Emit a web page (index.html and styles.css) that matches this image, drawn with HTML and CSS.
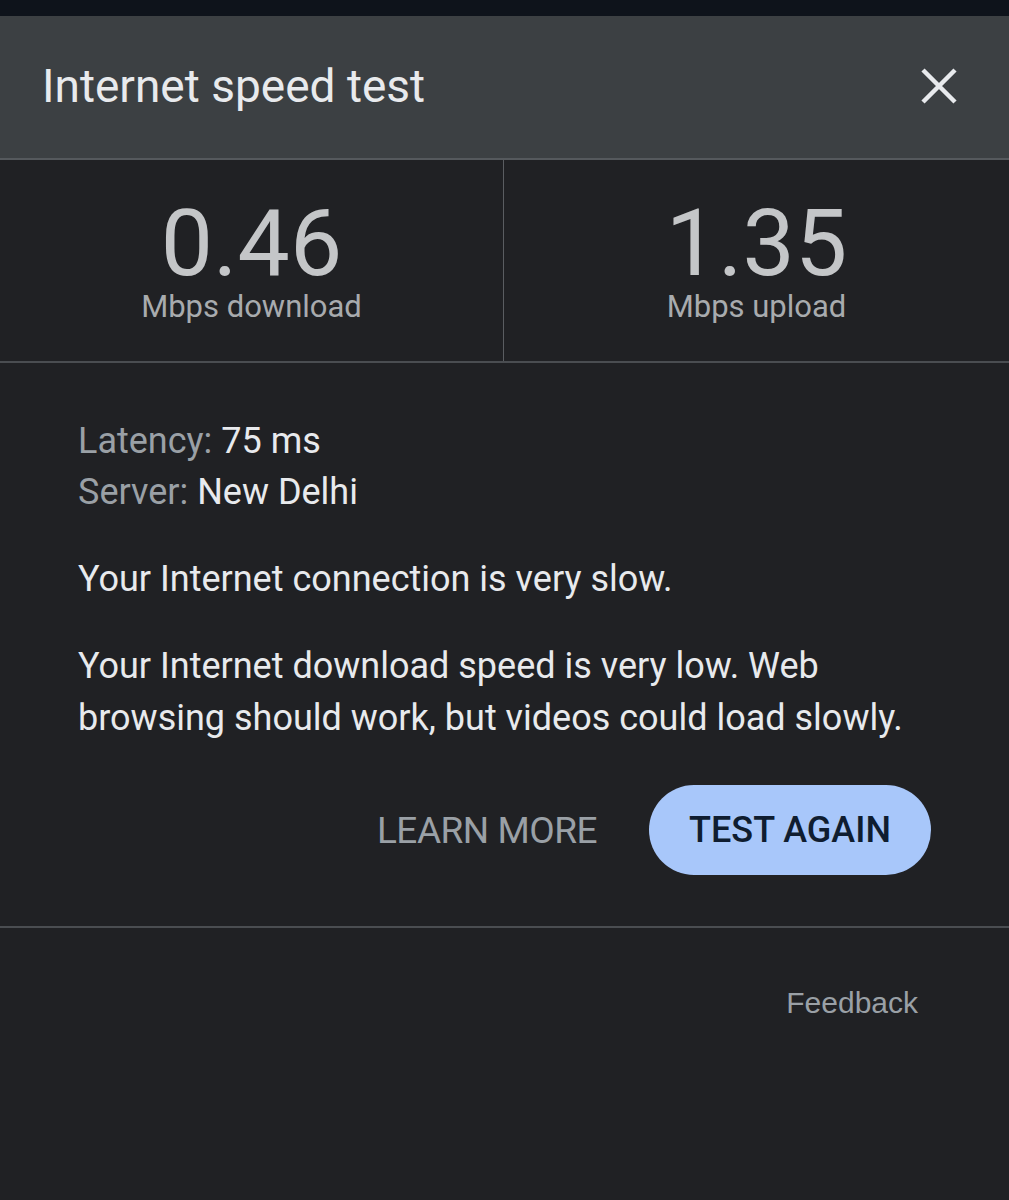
FILE: index.html
```html
<!DOCTYPE html>
<html>
<head>
<meta charset="utf-8">
<link rel="stylesheet" href="styles.css">
</head>
<body>
<div class="topstrip"></div>
<div class="dialog">
  <header class="head">
    <h1 class="title">Internet speed test</h1>
    <svg class="close" width="40" height="40" viewBox="0 0 40 40"><path d="M4 4 L36 36 M36 4 L4 36" stroke="#e8eaed" stroke-width="4.5" stroke-linecap="butt"/></svg>
  </header>
  <section class="stats">
    <div class="stat">
      <div class="num">0.46</div>
      <div class="unit">Mbps download</div>
    </div>
    <div class="stat">
      <div class="num">1.35</div>
      <div class="unit">Mbps upload</div>
    </div>
  </section>
  <section class="body">
    <div class="meta">
      <div><span class="lbl">Latency:</span> 75 ms</div>
      <div><span class="lbl">Server:</span> New Delhi</div>
    </div>
    <p class="msg first">Your Internet connection is very slow.</p>
    <p class="msg para">Your Internet download speed is very low. Web browsing should work, but videos could load slowly.</p>
    <div class="actions">
      <span class="learn">LEARN MORE</span>
      <span class="again">TEST AGAIN</span>
    </div>
  </section>
  <footer class="foot">
    <span class="feedback">Feedback</span>
  </footer>
</div>
</body>
</html>
```
FILE: styles.css
```css
html, body { margin: 0; padding: 0; }
body {
  background: #202124;
  font-family: Roboto, "Noto Sans", sans-serif;
  color: #e8eaed;
  width: 1009px;
  height: 1200px;
  overflow: hidden;
}
.topstrip { height: 16px; background: #0e131b; }
.head {
  height: 144px;
  background: #3c4043;
  border-bottom: 2px solid #55595d;
  box-sizing: border-box;
  display: flex;
  align-items: center;
  justify-content: space-between;
  padding: 0 50px 0 42px;
}
.title {
  margin: 0 0 2px 0;
  font-weight: 400;
  font-size: 46px;
  color: #e8eaed;
  letter-spacing: 0;
}
.close { display: block; margin-bottom: 3px; }
.stats {
  display: grid;
  grid-template-columns: 504px 1fr;
  height: 203px;
  border-bottom: 2px solid #4a4d51;
  box-sizing: border-box;
}
.stat {
  display: flex;
  flex-direction: column;
  align-items: center;
  padding-top: 44px;
}
.stat:first-child { border-right: 1px solid #5a5d61; }
.num {
  font-size: 93px;
  line-height: 80px;
  color: #c4c6c8;
}
.unit {
  font-size: 31px;
  color: #a8abae;
  line-height: 36px;
  margin-top: 5px;
}
.body {
  padding: 53px 78px 0 78px;
  height: 565px;
  box-sizing: border-box;
  border-bottom: 2px solid #4a4d51;
}
.meta { font-size: 36px; line-height: 51px; color: #e8eaed; }
.lbl { color: #9aa0a6; }
.msg { margin: 0; font-size: 36px; line-height: 52px; color: #e8eaed; }
.first { margin-top: 35px; }
.para { margin-top: 35px; }
.actions {
  display: flex;
  justify-content: flex-end;
  align-items: center;
  gap: 52px;
  margin-top: 41px;
}
.learn {
  font-size: 37px;
  color: #9aa0a6;
  letter-spacing: -0.5px;
}
.again {
  display: flex;
  align-items: center;
  justify-content: center;
  width: 282px;
  height: 90px;
  border-radius: 45px;
  background: #a8c7fa;
  color: #0f1d30;
  font-size: 36px;
  font-weight: 500;
}
.foot {
  display: flex;
  justify-content: flex-end;
  padding: 58px 91px 0 0;
}
.feedback { font-size: 30px; color: #9aa0a6; font-family: "Liberation Sans", Arial, sans-serif; }
```
